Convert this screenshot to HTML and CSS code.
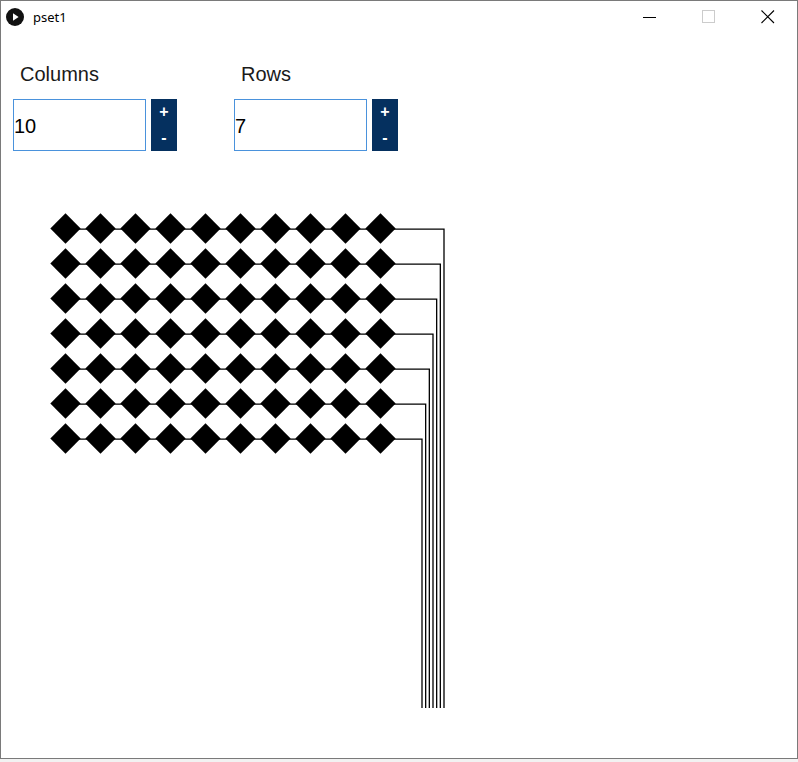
FILE: index.html
```html
<!DOCTYPE html>
<html>
<head>
<meta charset="utf-8">
<title>pset1</title>
<link rel="stylesheet" href="styles.css">
</head>
<body>
<div class="window">
  <div class="titlebar">
    <svg class="app-icon" width="18" height="18" viewBox="0 0 18 18">
      <circle cx="9" cy="9" r="9" fill="#111"/>
      <path d="M7 5.2 L12.6 9 L7 12.8 Z" fill="#fff"/>
    </svg>
    <span class="title">pset1</span>
    <div class="caption-buttons">
      <div class="cap-btn">
        <svg width="14" height="14" viewBox="0 0 14 14"><path d="M0 7.5 H13" stroke="#000" stroke-width="1"/></svg>
      </div>
      <div class="cap-btn">
        <svg width="14" height="14" viewBox="0 0 14 14"><rect x="0.5" y="0.5" width="12" height="12" fill="none" stroke="#ccc" stroke-width="1"/></svg>
      </div>
      <div class="cap-btn">
        <svg width="14" height="14" viewBox="0 0 14 14"><path d="M0.5 0.5 L13 13 M13 0.5 L0.5 13" stroke="#000" stroke-width="1.1"/></svg>
      </div>
    </div>
  </div>
  <div class="content">
    <div class="controls">
      <div class="field">
        <div class="label">Columns</div>
        <div class="spinner">
          <div class="input">10</div>
          <div class="stepper"><div class="step">+</div><div class="step">-</div></div>
        </div>
      </div>
      <div class="field">
        <div class="label">Rows</div>
        <div class="spinner">
          <div class="input">7</div>
          <div class="stepper"><div class="step">+</div><div class="step">-</div></div>
        </div>
      </div>
    </div>
    <svg id="canvas" class="canvas" width="796" height="606" viewBox="1 151 796 606"></svg>
  </div>
</div>
<script src="script.js"></script>
</body>
</html>
```

FILE: styles.css
```css
html, body {
  margin: 0;
  padding: 0;
}
body {
  width: 798px;
  height: 762px;
  overflow: hidden;
  background: #f2f2f2;
  font-family: "Liberation Sans", Arial, sans-serif;
}
.window {
  box-sizing: border-box;
  width: 798px;
  height: 759px;
  border: 1px solid #7a7a7a;
  background: #fff;
  display: flex;
  flex-direction: column;
}
.titlebar {
  height: 32px;
  display: flex;
  align-items: center;
  flex-shrink: 0;
}
.app-icon {
  margin-left: 5px;
  display: block;
}
.title {
  margin-left: 9px;
  font-family: "Noto Sans", sans-serif;
  font-size: 13px;
  color: #000;
  margin-top: -1px;
}
.caption-buttons {
  margin-left: auto;
  display: flex;
  height: 32px;
}
.cap-btn {
  width: 59px;
  height: 32px;
  display: flex;
  align-items: center;
  justify-content: center;
}
.cap-btn svg {
  display: block;
}
.content {
  flex: 1;
  display: flex;
  flex-direction: column;
}
.controls {
  display: flex;
  gap: 57px;
  padding: 29px 0 0 12px;
  height: 89px;
}
.field {
  display: flex;
  flex-direction: column;
}
.label {
  font-size: 20px;
  line-height: 24px;
  height: 24px;
  margin-left: 7px;
  color: #1a1a1a;
  margin-bottom: 13px;
}
.spinner {
  display: flex;
  gap: 5px;
}
.input {
  box-sizing: border-box;
  width: 133px;
  height: 52px;
  border: 1px solid #4a92dc;
  font-size: 20px;
  line-height: 24px;
  padding-top: 14px;
  color: #000;
}
.stepper {
  width: 26px;
  height: 52px;
  background: #05305f;
  display: flex;
  flex-direction: column;
}
.step {
  height: 26px;
  display: flex;
  align-items: center;
  justify-content: center;
  color: #fff;
  font-size: 16px;
  font-weight: bold;
}
.canvas {
  display: block;
}
```

FILE: script.js
```js
(function () {
  var NS = "http://www.w3.org/2000/svg";
  var svg = document.getElementById("canvas");
  var cols = 10, rows = 7;
  var x0 = 65.5, y0 = 228.5, pitch = 35, h = 15.2;
  function el(name, attrs) {
    var e = document.createElementNS(NS, name);
    for (var k in attrs) e.setAttribute(k, attrs[k]);
    svg.appendChild(e);
    return e;
  }
  for (var r = 0; r < rows; r++) {
    var cy = y0 + r * pitch;
    var ly = cy + 0.7;
    var vx = 444 - r * (22 / 6);
    el("path", {
      d: "M" + x0 + " " + ly + " H" + vx + " V708",
      fill: "none",
      stroke: "#000",
      "stroke-width": "1.3"
    });
    for (var c = 0; c < cols; c++) {
      var cx = x0 + c * pitch;
      el("path", {
        d: "M" + (cx - h) + " " + cy + " L" + cx + " " + (cy - h) + " L" + (cx + h) + " " + cy + " L" + cx + " " + (cy + h) + " Z",
        fill: "#000"
      });
    }
  }
})();
```
